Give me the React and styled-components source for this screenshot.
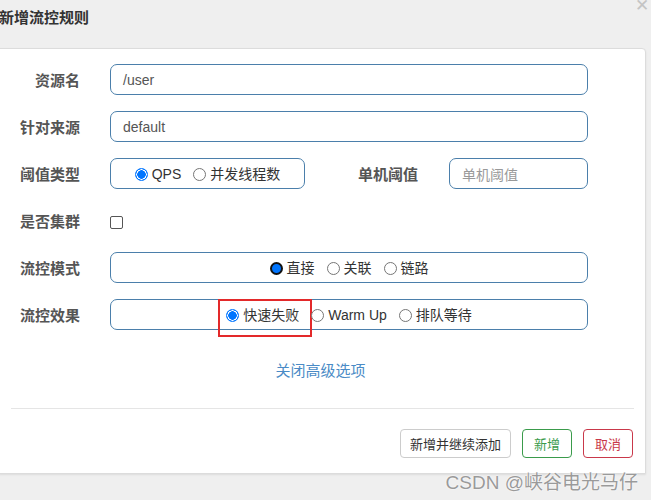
import React from "react";
import styled, { createGlobalStyle, css } from "styled-components";

const Global = createGlobalStyle`
  html, body { margin: 0; padding: 0; background: #efefef; }
  body { font-family: "Liberation Sans", "Noto Sans CJK SC", sans-serif; }
  * { box-sizing: border-box; }
`;

const Page = styled.div`
  position: relative;
  width: 651px;
  height: 500px;
  overflow: hidden;
  background: #efefef;
`;

const Header = styled.div`
  height: 48px;
  display: flex;
  justify-content: space-between;
  align-items: flex-start;
`;

const Title = styled.h4`
  margin: 7px 0 0 -1px;
  font-size: 15px;
  line-height: 20px;
  font-weight: bold;
  color: #333;
  font-family: "Noto Sans CJK SC", sans-serif;
`;

const Close = styled.span`
  margin: -4px 2px 0 0;
  font-size: 17px;
  line-height: 20px;
  color: #c4c4c4;
  font-family: "Liberation Sans", sans-serif;
`;

const Panel = styled.div`
  margin: 0 5px 0 -1px;
  height: 426px;
  background: #fff;
  border: 1px solid #dcdcdc;
  border-top-right-radius: 4px;
  box-shadow: 0 1px 2px rgba(0, 0, 0, 0.08);
  padding: 15px 12px 15px 12px;
  display: flex;
  flex-direction: column;
`;

const Form = styled.div`
  display: grid;
  grid-template-columns: 68px 478px;
  column-gap: 30px;
  row-gap: 16px;
  grid-auto-rows: 31px;
`;

const Label = styled.label`
  display: flex;
  align-items: center;
  justify-content: flex-end;
  font-size: 15px;
  font-weight: bold;
  color: #555;
  font-family: "Noto Sans CJK SC", sans-serif;
  white-space: nowrap;
`;

const boxBorder = css`
  border: 1px solid #4b7fab;
  border-radius: 7px;
  background: #fff;
`;

const Input = styled.div`
  ${boxBorder};
  display: flex;
  align-items: center;
  padding: 0 12px;
  font-size: 14px;
  color: ${(p) => (p.$placeholder ? "#999" : "#555")};
  font-family: "Liberation Sans", "Noto Sans CJK SC", sans-serif;
`;

const RadioBox = styled.div`
  ${boxBorder};
  display: flex;
  align-items: center;
  justify-content: center;
  gap: 12px;
  padding-top: 1px;
`;

const SplitRow = styled.div`
  display: grid;
  grid-template-columns: 195px 1fr 139px;
  column-gap: 31px;
`;

const CheckRow = styled.div`
  display: flex;
  align-items: center;
  padding-top: 3px;
`;

const CheckBox = styled.span`
  width: 13px;
  height: 13px;
  border: 1px solid #555;
  border-radius: 2px;
  background: #fff;
`;

const Item = styled.span`
  position: relative;
  display: inline-flex;
  align-items: center;
  gap: 4px;
  font-size: 14px;
  line-height: 20px;
  color: #333;
  font-family: "Liberation Sans", "Noto Sans CJK SC", sans-serif;
  white-space: nowrap;

  ${(p) =>
    p.$marked &&
    css`
      &::after {
        content: "";
        position: absolute;
        left: -8px;
        right: -13px;
        top: -6px;
        bottom: -12px;
        border: 2px solid #e3292a;
        pointer-events: none;
      }
    `}
`;

const Dot = styled.span`
  width: 13px;
  height: 13px;
  border-radius: 50%;
  flex: none;
  border: 1px solid #767676;
  background: #fff;

  ${(p) =>
    p.$checked &&
    css`
      border: 1px solid #0075ff;
      background: radial-gradient(circle, #0075ff 0 4px, #fff 4.5px 5px, #0075ff 5.5px);
    `}

  ${(p) =>
    p.$focus &&
    css`
      border: 2px solid #111;
      background: radial-gradient(circle, #0075ff 0 3.5px, #0075ff 4px);
    `}
`;

const Radio = ({ label, checked, focus, marked }) => (
  <Item $marked={marked}>
    <Dot $checked={checked} $focus={focus} />
    {label}
  </Item>
);

const LinkRow = styled.div`
  margin-top: 29px;
  text-align: center;
  font-size: 15px;
  line-height: 22px;
  color: #4a8bc6;
  font-family: "Noto Sans CJK SC", sans-serif;
  padding-right: 4px;
`;

const Divider = styled.hr`
  margin: 27px -1px 0 -1px;
  border: 0;
  border-top: 1px solid #e5e5e5;
`;

const Footer = styled.div`
  margin-top: 20px;
  display: flex;
  justify-content: flex-end;
  gap: 11px;
`;

const tones = {
  default: { b: "#cccccc", c: "#333" },
  success: { b: "#3a9b4b", c: "#3a9b4b" },
  danger: { b: "#c9384a", c: "#c9384a" },
};

const Button = styled.button`
  height: 29px;
  padding: 0 9px;
  min-width: 50px;
  background: #fff;
  border: 1px solid ${(p) => tones[p.$tone].b};
  color: ${(p) => tones[p.$tone].c};
  border-radius: 4px;
  font-size: 13px;
  font-family: "Noto Sans CJK SC", sans-serif;
`;

const Watermark = styled.div`
  position: absolute;
  right: 13px;
  bottom: 6px;
  font-size: 19px;
  line-height: 22px;
  color: #9a9a9a;
  font-family: "Liberation Sans", "Noto Sans CJK SC", sans-serif;
  text-shadow: 0 0 2px #fff, 0 0 1px #fff;
`;

export default function App() {
  return (
    <Page>
      <Global />
      <Header>
        <Title>新增流控规则</Title>
        <Close>✕</Close>
      </Header>
      <Panel>
        <Form>
          <Label>资源名</Label>
          <Input>/user</Input>

          <Label>针对来源</Label>
          <Input>default</Input>

          <Label>阈值类型</Label>
          <SplitRow>
            <RadioBox>
              <Radio label="QPS" checked />
              <Radio label="并发线程数" />
            </RadioBox>
            <Label>单机阈值</Label>
            <Input $placeholder>单机阈值</Input>
          </SplitRow>

          <Label>是否集群</Label>
          <CheckRow>
            <CheckBox />
          </CheckRow>

          <Label>流控模式</Label>
          <RadioBox>
            <Radio label="直接" focus />
            <Radio label="关联" />
            <Radio label="链路" />
          </RadioBox>

          <Label>流控效果</Label>
          <RadioBox>
            <Radio label="快速失败" checked marked />
            <Radio label="Warm Up" />
            <Radio label="排队等待" />
          </RadioBox>
        </Form>
        <LinkRow>关闭高级选项</LinkRow>
        <Divider />
        <Footer>
          <Button $tone="default">新增并继续添加</Button>
          <Button $tone="success">新增</Button>
          <Button $tone="danger">取消</Button>
        </Footer>
      </Panel>
      <Watermark>CSDN @峡谷电光马仔</Watermark>
    </Page>
  );
}
